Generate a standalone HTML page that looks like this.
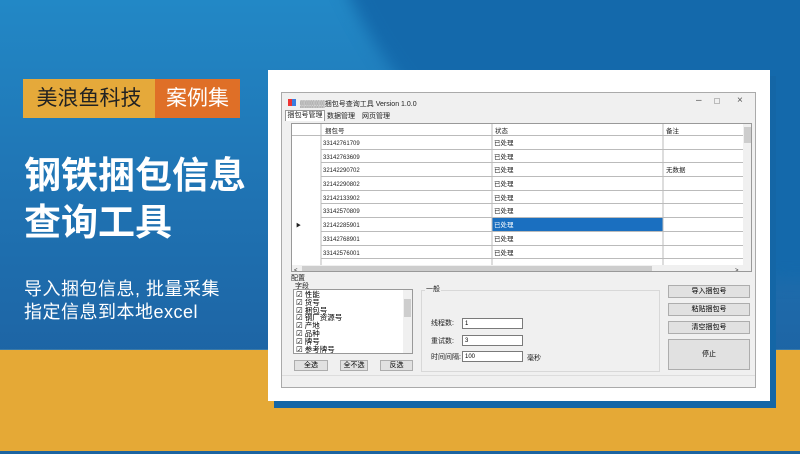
<!DOCTYPE html>
<html><head><meta charset="utf-8"><style>
*{margin:0;padding:0;box-sizing:border-box}
body{width:800px;height:454px;overflow:hidden;position:relative;font-family:"Liberation Sans","Noto Sans CJK SC",sans-serif;
background:linear-gradient(180deg,#2288c6 0,#1f72b2 45%,#1c5c9c 100%)}
.a{position:absolute}
.circ{left:300px;top:-720px;width:1000px;height:1000px;border-radius:50%;background:#1469ab;filter:blur(8px)}
.y{left:0;top:349px;width:800px;height:105px;background:#e5a936;border-top:1px solid #3a7aa8}
.bl{left:0;top:451px;width:800px;height:3px;background:#1d64a0}
.t1{left:23px;top:79px;width:132px;height:39px;background:#e5a93a;color:#222;font-size:21px;line-height:39px;text-align:center}
.t2{left:155px;top:79px;width:85px;height:39px;background:#df6f27;color:#fff;font-size:21px;line-height:39px;text-align:center}
.h{left:24px;color:#fff;font-size:37px;font-weight:bold;line-height:48px}
.s{left:24px;color:#fff;font-size:18px;line-height:22px;letter-spacing:0.5px}
.sh{left:274px;top:76px;width:502px;height:332px;background:#1466a6}
.card{left:268px;top:70px;width:502px;height:331px;background:#fff}
.win{left:281px;top:92px;width:475px;height:296px;background:#f0f0f0;border:1px solid #aaa;font-size:7px;color:#222}
.f{font-size:7px;color:#222}
.grid{left:291px;top:123px;width:461px;height:149px;background:#fff;border:1px solid #999;overflow:hidden}
.btn{background:#e1e1e1;border:1px solid #adadad;text-align:center;font-size:7px}
.inp{background:#fff;border:1px solid #7a7a7a;font-size:6px;padding-left:2px;line-height:10px;height:11px}
</style></head><body>
<div class="a circ"></div>
<div class="a y"></div><div class="a bl"></div>
<div class="a t1">美浪鱼科技</div><div class="a t2">案例集</div>
<div class="a h" style="top:152px">钢铁捆包信息</div>
<div class="a h" style="top:199px">查询工具</div>
<div class="a s" style="top:278px">导入捆包信息, 批量采集</div>
<div class="a s" style="top:301px">指定信息到本地excel</div>
<div class="a sh"></div><div class="a card"></div>
<div class="a win">
 <div class="a" style="left:6px;top:6px;width:8px;height:7px;background:linear-gradient(90deg,#e33 50%,#3a7de0 50%)"></div>
 <div class="a" style="left:18px;top:6px;font-size:7px">▒▒▒▒▒捆包号查询工具 Version 1.0.0</div>
 <div class="a" style="left:414px;top:2px;font-size:10px;color:#555">–</div>
 <div class="a" style="left:432px;top:5px;width:6px;height:6px;border:1px solid #bbb"></div>
 <div class="a" style="left:455px;top:2px;font-size:10px;color:#555">×</div>
 <div class="a" style="left:3px;top:17px;width:40px;height:11px;background:#fff;border:1px solid #999;border-bottom:none;text-align:center;line-height:10px">捆包号管理</div>
 <div class="a" style="left:45px;top:19px;line-height:10px">数据管理</div>
 <div class="a" style="left:80px;top:19px;line-height:10px">网页管理</div>
</div>
<div class="a grid">
 <svg width="461" height="149" style="position:absolute;left:0;top:0" font-family="Liberation Sans,Noto Sans CJK SC,sans-serif" font-size="6.5" fill="#222">
  <rect x="200" y="93" width="171" height="14" fill="#1a6fc0"/>
  <g stroke="#bbb" stroke-width="1">
   <line x1="29" y1="0" x2="29" y2="149"/><line x1="200" y1="0" x2="200" y2="149"/><line x1="371" y1="0" x2="371" y2="149"/>
   <line x1="0" y1="11.5" x2="451" y2="11.5"/><line x1="29" y1="25.5" x2="451" y2="25.5"/><line x1="29" y1="38.5" x2="451" y2="38.5"/><line x1="29" y1="52.5" x2="451" y2="52.5"/><line x1="29" y1="66.5" x2="451" y2="66.5"/><line x1="29" y1="79.5" x2="451" y2="79.5"/><line x1="29" y1="93.5" x2="451" y2="93.5"/><line x1="29" y1="107.5" x2="451" y2="107.5"/><line x1="29" y1="121.5" x2="451" y2="121.5"/><line x1="29" y1="134.5" x2="451" y2="134.5"/>
  </g>
  <text x="33" y="9">捆包号</text><text x="203" y="9">状态</text><text x="374" y="9">备注</text>
  <g font-size="6"><text x="31" y="21">33142761709</text><text x="31" y="35">33142763609</text><text x="31" y="48">32142290702</text><text x="31" y="62">32142290802</text><text x="31" y="76">32142133902</text><text x="31" y="89">33142570809</text><text x="31" y="103">32142285901</text><text x="31" y="117">33142768901</text><text x="31" y="131">33142576001</text></g>
  <g><text x="202" y="21">已处理</text><text x="202" y="35">已处理</text><text x="202" y="48">已处理</text><text x="202" y="62">已处理</text><text x="202" y="76">已处理</text><text x="202" y="89">已处理</text><text x="202" y="103" fill="#fff">已处理</text><text x="202" y="117">已处理</text><text x="202" y="131">已处理</text><text x="374" y="48">无数据</text></g>
  <text x="4" y="103" font-size="5">▶</text>
  <rect x="451" y="0" width="10" height="141" fill="#f0f0f0"/><rect x="452" y="3" width="8" height="16" fill="#cdcdcd"/>
  <rect x="0" y="141" width="461" height="8" fill="#f0f0f0"/><rect x="10" y="142" width="350" height="6" fill="#cdcdcd"/>
  <text x="2" y="148" font-size="6">&lt;</text><text x="443" y="148" font-size="6">&gt;</text>
 </svg>
</div>
<div class="a f" style="left:291px;top:273px">配置</div>
<div class="a f" style="left:295px;top:281px">字段</div>
<div class="a" style="left:293px;top:289px;width:120px;height:65px;background:#fff;border:1px solid #999;font-size:7.5px;line-height:7.8px;padding:1px 0 0 2px">
 ☑ 性能<br>☑ 货号<br>☑ 捆包号<br>☑ 钢厂资源号<br>☑ 产地<br>☑ 品种<br>☑ 牌号<br>☑ 参考牌号
 <div class="a" style="right:0;top:0;width:9px;height:63px;background:#f0f0f0"><div style="margin:9px 1px;height:18px;background:#cdcdcd"></div></div>
</div>
<div class="a btn" style="left:294px;top:360px;width:34px;height:11px;line-height:9px">全选</div>
<div class="a btn" style="left:340px;top:360px;width:28px;height:11px;line-height:9px">全不选</div>
<div class="a btn" style="left:380px;top:360px;width:33px;height:11px;line-height:9px">反选</div>
<div class="a" style="left:421px;top:290px;width:239px;height:82px;border:1px solid #d8d8d8"></div>
<div class="a f" style="left:425px;top:284px;background:#f0f0f0;padding:0 1px">一般</div>
<div class="a f" style="left:431px;top:318px">线程数:</div><div class="a inp" style="left:462px;top:318px;width:61px">1</div>
<div class="a f" style="left:431px;top:336px">重试数:</div><div class="a inp" style="left:462px;top:335px;width:61px">3</div>
<div class="a f" style="left:431px;top:352px">时间间隔:</div><div class="a inp" style="left:462px;top:351px;width:61px">100</div>
<div class="a f" style="left:527px;top:353px">毫秒</div>
<div class="a btn" style="left:668px;top:285px;width:82px;height:13px;line-height:11px">导入捆包号</div>
<div class="a btn" style="left:668px;top:303px;width:82px;height:13px;line-height:11px">粘贴捆包号</div>
<div class="a btn" style="left:668px;top:321px;width:82px;height:13px;line-height:11px">清空捆包号</div>
<div class="a btn" style="left:668px;top:339px;width:82px;height:31px;line-height:29px">停止</div>
<div class="a" style="left:282px;top:375px;width:473px;height:1px;background:#ddd"></div>
</body></html>
